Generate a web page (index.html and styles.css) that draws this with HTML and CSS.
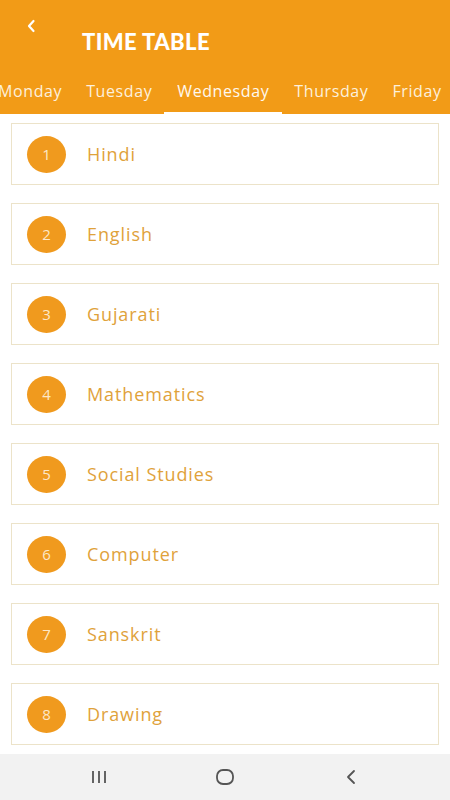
FILE: index.html
```html
<!DOCTYPE html>
<html>
<head>
<meta charset="utf-8">
<link rel="stylesheet" href="styles.css">
</head>
<body>
<div class="screen">
  <header class="appbar">
    <div class="topline">
      <svg class="back" width="10" height="14" viewBox="0 0 10 14"><path d="M7.5 2 L3 7 L7.5 12" fill="none" stroke="#fff" stroke-width="2.2" stroke-linecap="round" stroke-linejoin="round"/></svg>
    </div>
    <h1 class="title">TIME TABLE</h1>
    <div class="tabs">
      <div class="strip">
        <div class="tab">Monday</div>
        <div class="tab">Tuesday</div>
        <div class="tab active">Wednesday</div>
        <div class="tab">Thursday</div>
        <div class="tab">Friday</div>
      </div>
    </div>
  </header>
  <main class="list">
    <div class="card"><span class="num">1</span><span class="subj">Hindi</span></div>
    <div class="card"><span class="num">2</span><span class="subj">English</span></div>
    <div class="card"><span class="num">3</span><span class="subj">Gujarati</span></div>
    <div class="card"><span class="num">4</span><span class="subj">Mathematics</span></div>
    <div class="card"><span class="num">5</span><span class="subj">Social Studies</span></div>
    <div class="card"><span class="num">6</span><span class="subj">Computer</span></div>
    <div class="card"><span class="num">7</span><span class="subj">Sanskrit</span></div>
    <div class="card"><span class="num">8</span><span class="subj">Drawing</span></div>
  </main>
  <nav class="navbar">
    <svg width="20" height="16" viewBox="0 0 20 16"><path d="M4 2v12M10 2v12M16 2v12" stroke="#555" stroke-width="1.8" fill="none"/></svg>
    <svg width="20" height="18" viewBox="0 0 20 18"><rect x="2" y="2" width="16" height="14" rx="6" fill="none" stroke="#555" stroke-width="1.8"/></svg>
    <svg width="20" height="18" viewBox="0 0 20 18"><path d="M13 3 L7 9 L13 15" fill="none" stroke="#555" stroke-width="1.8" stroke-linecap="round" stroke-linejoin="round"/></svg>
  </nav>
</div>
</body>
</html>
```
FILE: styles.css
```css
* { box-sizing: border-box; }
html, body { margin: 0; padding: 0; }
body {
  width: 450px;
  height: 800px;
  overflow: hidden;
  font-family: "Open Sans", "Liberation Sans", sans-serif;
  background: #fff;
}
.screen {
  display: flex;
  flex-direction: column;
  height: 800px;
}
.appbar {
  background: #f29b17;
  color: #fff;
  height: 114px;
  display: flex;
  flex-direction: column;
}
.topline {
  height: 20px;
  padding: 19px 0 0 26px;
}
.back { display: block; }
.title {
  margin: 9px 0 0 82px;
  font-family: Lato, "Liberation Sans", sans-serif;
  font-weight: 900;
  font-size: 22px;
  letter-spacing: 0.4px;
  line-height: 26px;
  height: 26px;
}
.tabs {
  margin-top: auto;
  overflow: hidden;
  height: 44px;
}
.strip {
  display: flex;
  margin-left: -14px;
  height: 44px;
}
.tab {
  flex: none;
  padding: 0 12px;
  font-size: 16px;
  line-height: 42px;
  height: 44px;
  color: #fdf0dc;
  border-bottom: 2px solid transparent;
  white-space: nowrap;
  letter-spacing: 0.6px;
}
.tab.active {
  padding: 0 13px;
  border-bottom: 2px solid #fff;
  color: #fff8ee;
}
.list {
  flex: 1;
  display: flex;
  flex-direction: column;
  gap: 18px;
  padding: 9px 11px 0 11px;
}
.card {
  height: 62px;
  border: 1px solid #ece3c9;
  display: flex;
  align-items: center;
  padding-left: 15px;
  flex: none;
}
.num {
  width: 39px;
  height: 37px;
  border-radius: 50%;
  background: #f09a1e;
  color: #fde8c8;
  display: flex;
  align-items: center;
  justify-content: center;
  font-size: 15px;
  flex: none;
}
.subj {
  margin-left: 21px;
  color: #dfa23b;
  font-size: 18px;
  font-weight: 500;
  letter-spacing: 0.9px;
}
.navbar {
  height: 46px;
  background: #f2f2f2;
  display: flex;
  align-items: center;
  justify-content: center;
  gap: 106px;
  flex: none;
}
```
